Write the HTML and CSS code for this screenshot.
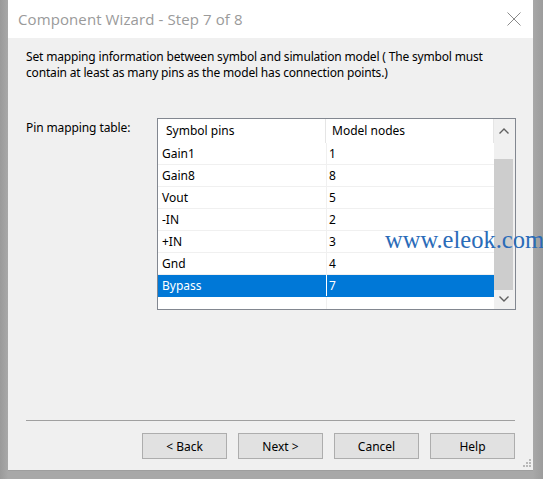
FILE: index.html
```html
<!DOCTYPE html>
<html>
<head>
<meta charset="utf-8">
<link rel="stylesheet" href="styles.css">
</head>
<body>
<div class="desktop">
  <div class="window">
    <div class="titlebar">
      <span class="title">Component Wizard - Step 7 of 8</span>
      <svg class="close" width="14" height="14" viewBox="0 0 14 14"><path d="M0.5 0.5 L13.5 13.5 M13.5 0.5 L0.5 13.5" stroke="#8a8a8a" stroke-width="1" fill="none"/></svg>
    </div>
    <div class="content">
      <p class="intro">Set mapping information between symbol and simulation model ( The symbol must contain at least as many pins as the model has connection points.)</p>
      <div class="mapping">
        <span class="label">Pin mapping table:</span>
        <div class="table">
          <div class="grid">
            <div class="head">
              <div class="hcell c1">Symbol pins</div>
              <div class="hcell c2">Model nodes</div>
            </div>
            <div class="row"><div class="cell c1">Gain1</div><div class="cell c2">1</div></div>
            <div class="row"><div class="cell c1">Gain8</div><div class="cell c2">8</div></div>
            <div class="row"><div class="cell c1">Vout</div><div class="cell c2">5</div></div>
            <div class="row"><div class="cell c1">-IN</div><div class="cell c2">2</div></div>
            <div class="row"><div class="cell c1">+IN</div><div class="cell c2">3</div></div>
            <div class="row"><div class="cell c1">Gnd</div><div class="cell c2">4</div></div>
            <div class="row sel"><div class="cell c1">Bypass</div><div class="cell c2">7</div></div>
            <div class="rest"><div class="c1"></div><div class="c2"></div></div>
          </div>
          <div class="scrollbar">
            <svg class="arrow" width="10" height="6" viewBox="0 0 10 6"><path d="M0.5 5.5 L5 1 L9.5 5.5" stroke="#606060" stroke-width="1.4" fill="none"/></svg>
            <div class="thumb"></div>
            <svg class="arrow" width="10" height="6" viewBox="0 0 10 6"><path d="M0.5 0.5 L5 5 L9.5 0.5" stroke="#606060" stroke-width="1.4" fill="none"/></svg>
          </div>
        </div>
      </div>
      <div class="spacer"></div>
      <hr class="sep">
      <div class="buttons">
        <button class="btn">&lt; Back</button>
        <button class="btn">Next &gt;</button>
        <button class="btn">Cancel</button>
        <button class="btn">Help</button>
      </div>
    </div>
    <svg class="grip" width="9" height="9" viewBox="0 0 9 9">
      <rect x="6" y="0" width="2" height="2" fill="#b8b8b8"/>
      <rect x="3" y="3" width="2" height="2" fill="#b8b8b8"/>
      <rect x="6" y="3" width="2" height="2" fill="#b8b8b8"/>
      <rect x="0" y="6" width="2" height="2" fill="#b8b8b8"/>
      <rect x="3" y="6" width="2" height="2" fill="#b8b8b8"/>
      <rect x="6" y="6" width="2" height="2" fill="#b8b8b8"/>
    </svg>
  </div>
  <div class="watermark">www.eleok.com</div>
</div>
</body>
</html>
```
FILE: styles.css
```css
* { box-sizing: border-box; }
html, body { margin: 0; padding: 0; }
body {
  width: 543px;
  height: 479px;
  overflow: hidden;
  font-family: "Noto Sans", "Open Sans", sans-serif;
  font-size: 12px;
  color: #000;
}
.desktop {
  position: relative;
  width: 543px;
  height: 479px;
  background: linear-gradient(to right, #9a9a9a 0px, #a8a8a8 8px, #a8a8a8 533px, #9c9c9c 543px);
  padding-left: 8px;
}
.window {
  position: relative;
  width: 525px;
  height: 470px;
  background: #f0f0f0;
  display: flex;
  flex-direction: column;
  box-shadow: 0 1px 0 #9e9e9e;
}
.titlebar {
  height: 38px;
  background: #fff;
  display: flex;
  align-items: center;
  justify-content: space-between;
  padding: 0 12px 0 10px;
  flex: none;
}
.title {
  font-family: "Open Sans", "Noto Sans", sans-serif;
  font-size: 15px;
  color: #9a9a9a;
  letter-spacing: 0.1px;
}
.close { display: block; }
.content {
  flex: 1;
  display: flex;
  flex-direction: column;
  padding: 0 18px 11px 18px;
}
.intro {
  margin: 11px 0 0 0;
  line-height: 16px;
  padding-right: 20px;
  letter-spacing: -0.17px;
}
.mapping {
  display: flex;
  align-items: flex-start;
  margin-top: 37px;
}
.label {
  width: 131px;
  flex: none;
  line-height: 16px;
  margin-top: 2px;
  letter-spacing: -0.1px;
}
.table {
  width: 359px;
  height: 192px;
  border: 1px solid #828790;
  background: #fff;
  display: flex;
}
.grid {
  width: 336px;
  display: flex;
  flex-direction: column;
}
.head {
  display: flex;
  height: 24px;
  flex: none;
}
.hcell {
  line-height: 24px;
  padding-left: 8px;
}
.head .c1 { width: 168px; border-right: 1px solid #e5e5e5; }
.head .c2 { width: 168px; border-right: 1px solid #e5e5e5; padding-left: 6px; }
.row {
  display: flex;
  height: 22px;
  border-bottom: 1px solid #f0f0f0;
  flex: none;
}
.cell {
  line-height: 21px;
  padding-left: 4px;
}
.row .c1, .rest .c1 { width: 169px; border-right: 1px solid #f0f0f0; }
.row .c2, .rest .c2 { width: 167px; padding-left: 2px; }
.row.sel { background: #0078d7; color: #fff; border-bottom: 1px solid #0078d7; }
.row.sel .c1 { border-right: 1px solid #fff; }
.row.sel .c2 { width: 166px; }
.rest { flex: 1; display: flex; }
.scrollbar {
  width: 21px;
  background: #f0f0f0;
  display: flex;
  flex-direction: column;
  align-items: center;
  padding: 9px 2px 7px 0;
}
.arrow { display: block; flex: none; margin-left: 1px; }
.thumb {
  width: 19px;
  flex: 1;
  background: #cdcdcd;
  margin: 25px 0 6px 0;
}
.spacer { flex: 1; }
.sep {
  margin: 0;
  border: none;
  border-top: 1px solid #a0a0a0;
  height: 0;
}
.buttons {
  display: flex;
  justify-content: flex-end;
  gap: 11px;
  margin-top: 12px;
}
.btn {
  width: 85px;
  height: 26px;
  background: #e1e1e1;
  border: 1px solid #adadad;
  font-family: "Noto Sans", "Open Sans", sans-serif;
  font-size: 12px;
  color: #000;
  padding: 0;
}
.grip {
  position: absolute;
  right: 1px;
  bottom: 2px;
}
.watermark {
  position: absolute;
  left: 385px;
  top: 226px;
  font-family: "Liberation Serif", serif;
  font-size: 24.5px;
  color: #2a6bb8;
  line-height: 28px;
  white-space: nowrap;
}
```
